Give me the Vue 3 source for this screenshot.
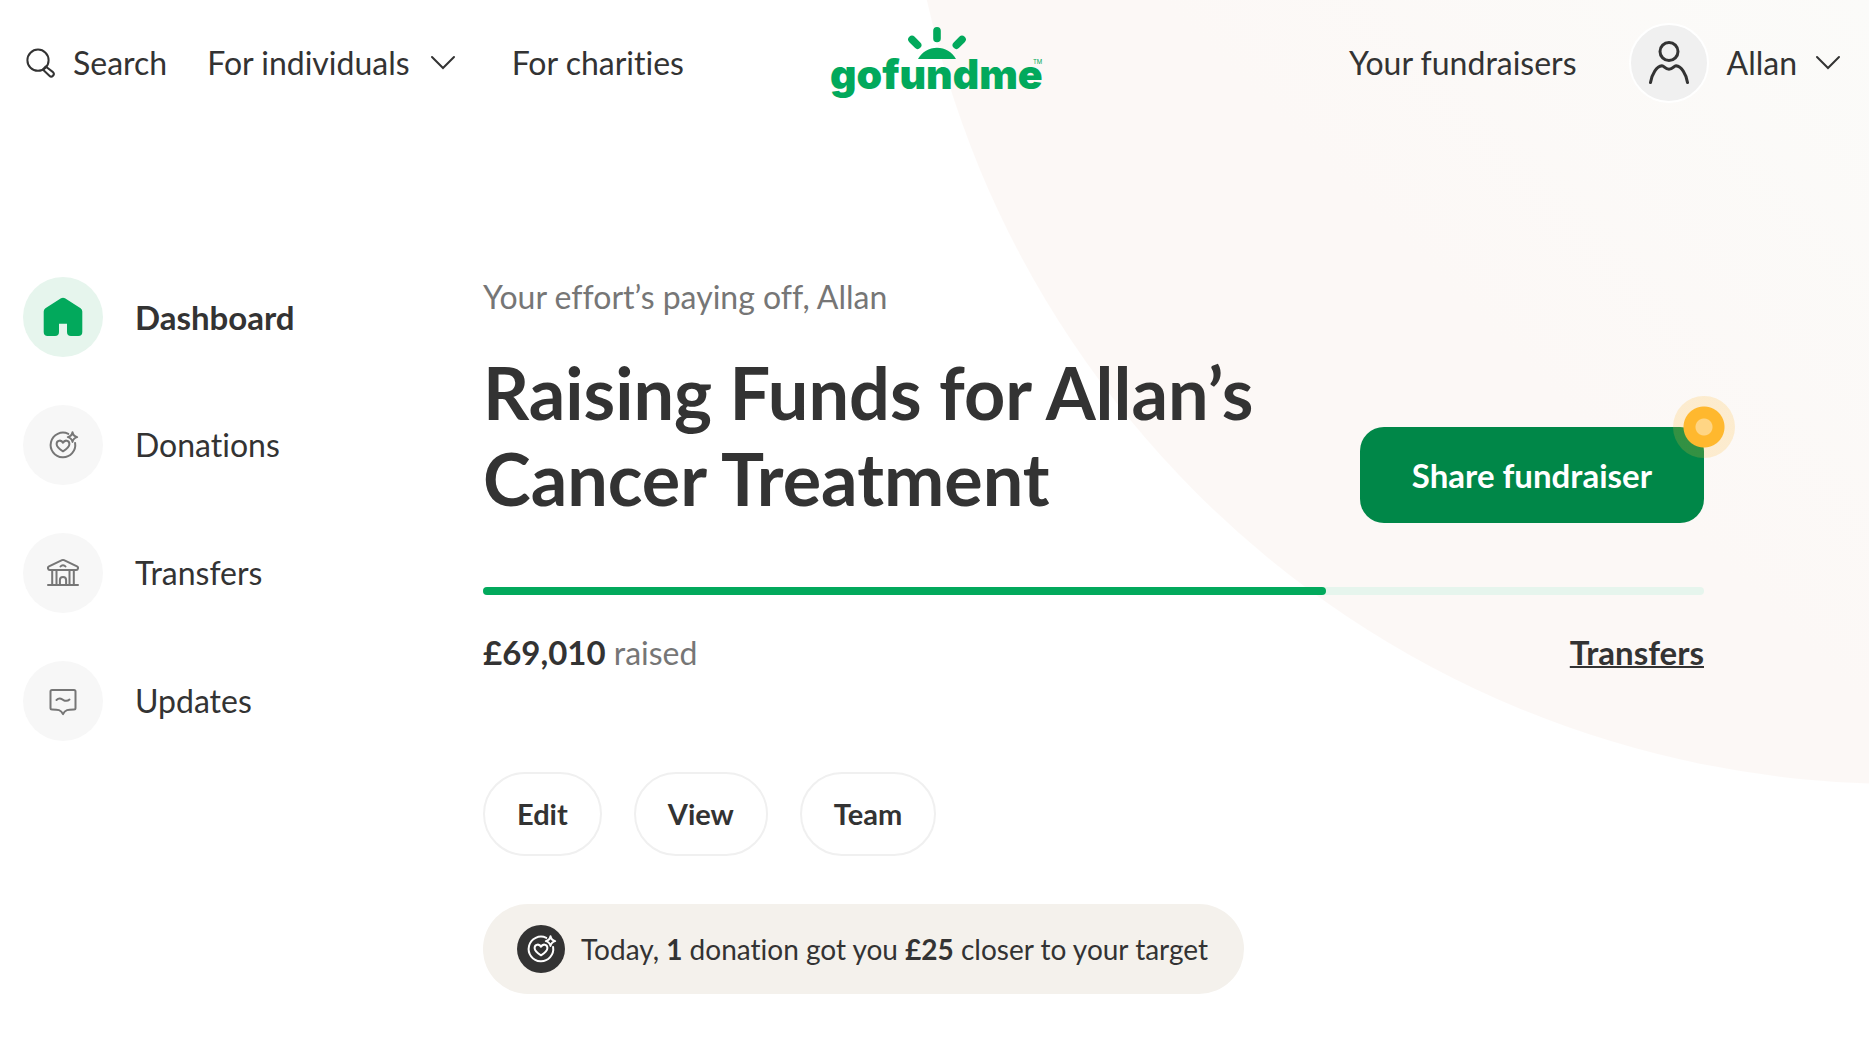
<script setup>
import { ref, computed } from 'vue'

const active = ref('Dashboard')
const navItems = ['Dashboard', 'Donations', 'Transfers', 'Updates']
const actions = ['Edit', 'View', 'Team']

const raised = 69010
const goal = 100000
const progress = computed(() => `${(raised / goal) * 100}%`)
const raisedLabel = `£${raised.toLocaleString('en-GB')}`
</script>

<template>
  <div class="page">
    <div class="backdrop" aria-hidden="true"></div>

    <header class="header">
      <nav class="nav nav-left" aria-label="Main">
        <a class="nav-link search" href="#search">
          <svg width="32" height="32" viewBox="2 0 32 32" fill="none" stroke="currentColor" stroke-width="2" aria-hidden="true">
            <circle cx="14" cy="13.2" r="10.6" />
            <path d="M18.8 22.6l2.9-3.1 7.3 5.6a2.5 2.5 0 0 1-3.6 3.6z" stroke-linejoin="round" />
          </svg>
          <span>Search</span>
        </a>
        <button class="nav-link individuals" type="button">
          <span>For individuals</span>
          <svg class="chevron" width="26" height="16" viewBox="0 0 26 16" aria-hidden="true"><path d="M2 2l11 11L24 2" /></svg>
        </button>
        <a class="nav-link" href="#charities">For charities</a>
      </nav>

      <a class="logo" href="#home" aria-label="gofundme">
        <svg width="216" height="92" viewBox="-4 7 216 92" aria-hidden="true">
          <g fill="none" stroke="#02a95c" stroke-width="7.6" stroke-linecap="round">
            <path d="M106 20.800v7.600M81 29.500l5.600 5.600M131 29.500l-5.600 5.600" />
          </g>
          <path d="M87 49c4-7 11-11.200 19-11.200s15 4.200 19 11.200z" fill="#02a95c" />
          <text class="wordmark" x="-1" y="79">gofundme<tspan class="mark" x="202" y="54">TM</tspan></text>
        </svg>
      </a>

      <nav class="nav nav-right" aria-label="Account">
        <a class="nav-link" href="#fundraisers">Your fundraisers</a>
        <button class="nav-link account" type="button">
          <span class="avatar">
            <svg width="40" height="44" viewBox="0 0 40 44" fill="none" stroke="currentColor" stroke-width="3" stroke-linecap="round" aria-hidden="true">
              <circle cx="20" cy="10.500" r="9" />
              <path d="M1.500 41.500C3 32.500 7.500 25.500 13 24.800c2.200 0 3 3.400 7 3.400s4.800-3.400 7-3.400c5.500.7 10 7.700 11.500 16.700" />
            </svg>
          </span>
          <span>Allan</span>
          <svg class="chevron" width="26" height="16" viewBox="0 0 26 16" aria-hidden="true"><path d="M2 2l11 11L24 2" /></svg>
        </button>
      </nav>
    </header>

    <div class="body">
      <nav class="sidebar" aria-label="Fundraiser">
        <a
          v-for="item in navItems"
          :key="item"
          class="side-link"
          :class="{ active: item === active }"
          :href="`#${item.toLowerCase()}`"
          @click="active = item"
        >
          <span class="side-icon">
            <svg v-if="item === 'Dashboard'" width="40" height="40" viewBox="0 0 40 40" fill="currentColor" aria-hidden="true">
              <path d="M18 1.300a4 4 0 0 1 4 0l15.600 9.900a4 4 0 0 1 1.700 3.300V35a4 4 0 0 1-4 4H28a4 4 0 0 1-4-4v-8.200h-8V35a4 4 0 0 1-4 4H4.700a4 4 0 0 1-4-4V14.500a4 4 0 0 1 1.700-3.300z" />
            </svg>
            <svg v-else-if="item === 'Donations'" class="line-icon" width="32" height="32" viewBox="0 0 32 32" aria-hidden="true">
              <path d="M21.300 4.900A12.300 12.300 0 1 0 28.100 14" />
              <path d="M16 22.300c-3.800-2.300-6.400-4.700-6.400-7.300 0-3.900 4.800-4.500 6.400-1.300 1.600-3.200 6.400-2.600 6.400 1.300 0 2.600-2.600 5-6.400 7.300z" />
              <path d="M25.500 3.300c.6 2.900 1.800 4.100 4.700 4.800-2.900.7-4.100 1.900-4.700 4.800-.6-2.900-1.800-4.100-4.700-4.800 2.900-.7 4.100-1.900 4.700-4.800z" />
            </svg>
            <svg v-else-if="item === 'Transfers'" class="line-icon" width="32" height="32" viewBox="0 0 32 32" aria-hidden="true">
              <path d="M15 3.100a2.500 2.500 0 0 1 2 0l13 6.200c1.700.9 1.200 3.700-.8 3.700H2.800C.8 13 .3 10.200 2 9.300zM1 28h30M5.200 13v15M9.500 13v15M22.500 13v15M26.800 13v15" />
              <path d="M12.900 28v-5a3.100 3.100 0 0 1 6.200 0v5M13.500 9.500c1.300-1.800 3.700-1.800 5 0" />
            </svg>
            <svg v-else class="line-icon" width="32" height="32" viewBox="0 0 32 32" aria-hidden="true">
              <path d="M5 5h22a1.500 1.500 0 0 1 1.500 1.500V23a1.500 1.500 0 0 1-1.500 1.500c-6 0-9 0-11 4.700-2-4.700-5-4.700-11-4.700A1.500 1.500 0 0 1 3.500 23V6.500A1.500 1.500 0 0 1 5 5z" />
              <path d="M9.500 15c2.500-2.400 4-1.500 6.500-.2 2.500 1.500 4 1.900 6.500-.2" />
            </svg>
          </span>
          <span>{{ item }}</span>
        </a>
      </nav>

      <main class="main">
        <p class="greeting">Your effort’s paying off, Allan</p>

        <div class="title-row">
          <h1 class="title">Raising Funds for Allan’s<br />Cancer Treatment</h1>
          <button class="share" type="button">
            Share fundraiser
            <span class="beacon" aria-hidden="true"></span>
          </button>
        </div>

        <div class="track" role="progressbar" aria-label="Raised" :aria-valuenow="raised" aria-valuemin="0" :aria-valuemax="goal">
          <div class="fill" :style="{ width: progress }"></div>
        </div>

        <div class="summary">
          <p class="raised"><strong>{{ raisedLabel }}</strong> raised</p>
          <a class="transfers" href="#transfers">Transfers</a>
        </div>

        <div class="actions">
          <button v-for="action in actions" :key="action" class="pill" type="button">{{ action }}</button>
        </div>

        <div class="notice">
          <span class="notice-icon">
            <svg class="line-icon" width="32" height="32" viewBox="0 0 32 32" aria-hidden="true">
              <path d="M21.300 4.900A12.300 12.300 0 1 0 28.100 14" />
              <path d="M16 22.300c-3.800-2.300-6.400-4.700-6.400-7.300 0-3.900 4.800-4.500 6.400-1.300 1.600-3.200 6.400-2.600 6.400 1.300 0 2.600-2.600 5-6.400 7.300z" />
              <path d="M25.500 3.300c.6 2.900 1.800 4.100 4.700 4.800-2.900.7-4.100 1.900-4.700 4.800-.6-2.900-1.800-4.100-4.700-4.800 2.900-.7 4.100-1.900 4.700-4.800z" />
            </svg>
          </span>
          <p>Today, <strong>1</strong> donation got you <strong>£25</strong> closer to your target</p>
        </div>
      </main>
    </div>
  </div>
</template>

<style>
body {
  margin: 0;
  background: #fff;
}
</style>

<style scoped>
.page {
  position: relative;
  overflow: hidden;
  min-height: 100vh;
  color: #333;
  font-family: Lato, "Open Sans", sans-serif;
  font-size: 32px;
  font-variant-ligatures: none;
  line-height: 40px;
}

p,
h1 {
  margin: 0;
}

a {
  color: inherit;
  text-decoration: none;
}

button {
  padding: 0;
  border: 0;
  background: none;
  color: inherit;
  font: inherit;
  font-variant-ligatures: none;
  cursor: pointer;
}

strong {
  font-weight: 700;
}

.backdrop {
  position: absolute;
  top: -1208px;
  right: -1027px;
  width: 1992px;
  height: 1992px;
  border-radius: 50%;
  background: linear-gradient(225deg, #fbfbf9 56%, #fcf8f6 74%);
}

.header {
  position: relative;
  display: grid;
  grid-template-columns: 1fr auto 1fr;
  align-items: center;
  height: 126px;
  padding: 0 26px;
}

.nav,
.nav-link {
  display: flex;
  align-items: center;
}

.search {
  gap: 15px;
  margin-right: 40px;
}

.individuals {
  gap: 20px;
  margin-right: 56px;
}

.nav-right {
  justify-content: flex-end;
  gap: 52px;
  padding-right: 2px;
}

.account {
  gap: 18px;
}

.chevron {
  fill: none;
  stroke: currentColor;
  stroke-width: 2;
  stroke-linecap: round;
}

.logo svg {
  display: block;
}

.wordmark {
  fill: #02a95c;
  font-family: Inter, sans-serif;
  font-size: 41px;
  font-weight: 900;
}

.mark {
  font-size: 6px;
  font-weight: 400;
}

.avatar {
  display: flex;
  align-items: center;
  justify-content: center;
  width: 76px;
  height: 76px;
  border: 2px solid #fff;
  border-radius: 50%;
  background: #f0f0f0;
}

.body {
  position: relative;
  display: flex;
  padding: 151px 165px 63px 23px;
}

.sidebar {
  display: flex;
  flex: 0 0 460px;
  flex-direction: column;
  align-items: flex-start;
  gap: 48px;
}

.side-link {
  display: flex;
  align-items: center;
  gap: 32px;
}

.side-icon {
  display: flex;
  align-items: center;
  justify-content: center;
  width: 80px;
  height: 80px;
  border-radius: 50%;
  background: #f7f7f7;
  color: #767676;
}

.active {
  font-size: 33px;
  font-weight: 700;
}

.active .side-icon {
  background: #e6f5ed;
  color: #02a95c;
}

.line-icon {
  fill: none;
  stroke: currentColor;
  stroke-width: 2;
  stroke-linecap: round;
  stroke-linejoin: round;
}

.main {
  flex: 1;
  min-width: 0;
}

.greeting {
  color: #767676;
}

.title-row {
  display: flex;
  align-items: flex-end;
  justify-content: space-between;
  margin-top: 32px;
}

.title {
  margin-bottom: 2px;
  font-size: 72px;
  font-weight: 700;
  line-height: 86px;
}

.share {
  position: relative;
  height: 96px;
  padding: 0 52px;
  border-radius: 24px;
  background: #008748;
  color: #fff;
  font-size: 33px;
  font-weight: 700;
}

.beacon {
  position: absolute;
  top: -31px;
  right: -31px;
  width: 62px;
  height: 62px;
  border-radius: 50%;
  background: radial-gradient(circle, #ffd584 8px, #ffb82e 9px, #ffb82e 20px, rgba(255, 184, 46, 0.2) 21px);
}

.track {
  height: 8px;
  margin-top: 64px;
  border-radius: 4px;
  background: #e6f5ed;
}

.fill {
  height: 8px;
  border-radius: 4px;
  background: #02a95c;
}

.summary {
  display: flex;
  justify-content: space-between;
  margin-top: 37px;
}

.raised {
  color: #767676;
}

.raised strong {
  color: #333;
  font-size: 33px;
}

.transfers {
  font-size: 33px;
  font-weight: 700;
  text-decoration: underline;
  text-decoration-thickness: 2px;
}

.actions {
  display: flex;
  gap: 32px;
  margin-top: 99px;
}

.pill {
  height: 84px;
  padding: 0 32px;
  border: 2px solid #f0f0f0;
  border-radius: 42px;
  background: #fff;
  font-size: 29px;
  font-weight: 700;
}

.notice {
  display: inline-flex;
  align-items: center;
  gap: 16px;
  height: 90px;
  margin-top: 48px;
  padding: 0 36px 0 34px;
  border-radius: 45px;
  background: #f4f1ec;
  font-size: 28px;
}

.notice-icon {
  display: flex;
  align-items: center;
  justify-content: center;
  width: 48px;
  height: 48px;
  border-radius: 50%;
  background: #333;
  color: #fff;
}
</style>
